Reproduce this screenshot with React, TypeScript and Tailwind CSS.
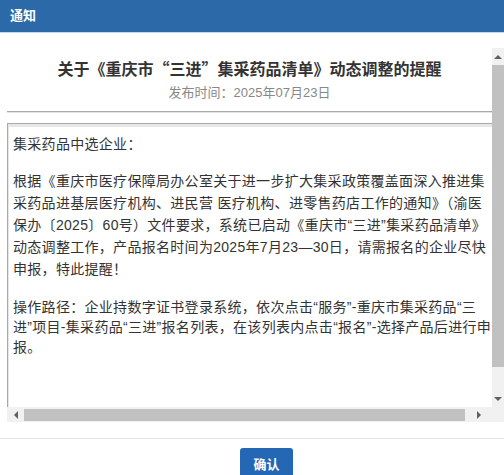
const bodyFont = { fontFamily: '"Liberation Sans", "Noto Sans CJK SC", sans-serif' };

function Arrow({ dir }: { dir: "up" | "down" | "left" | "right" }) {
  const pts = {
    up: "0,4 4,0 8,4",
    down: "0,0 8,0 4,4",
    left: "4,0 4,8 0,4",
    right: "0,0 0,8 4,4",
  }[dir];
  const vertical = dir === "up" || dir === "down";
  return (
    <svg width={vertical ? 8 : 4} height={vertical ? 4 : 8} viewBox={vertical ? "0 0 8 4" : "0 0 4 8"}>
      <polygon points={pts} fill="#606060" />
    </svg>
  );
}

export default function App() {
  return (
    <div className="w-[504px] h-[475px] overflow-hidden bg-white" style={bodyFont}>
      <div className="h-[32px] bg-[#2b69a9] px-[10px] flex items-center text-white font-bold text-[13px]">
        通知
      </div>
      <div className="h-px bg-[#c4d9ee]" />

      <div className="mt-[15px] ml-[7px] flex h-[374px]">
        <div className="w-[485px] flex flex-col">
          <div className="h-[359px] shrink-0 overflow-hidden flex flex-col">
            <h1
              className="mt-[8px] shrink-0 text-center text-[16px] leading-[24px] font-semibold text-[#333]"
              style={{ fontFamily: '"Noto Sans CJK SC", sans-serif' }}
            >
              关于《重庆市“三进”集采药品清单》动态调整的提醒
            </h1>
            <p className="mt-[3px] shrink-0 text-center text-[13px] leading-[20px] text-[#888]">
              发布时间：2025年07月23日
            </p>
            <div className="mt-[8px] shrink-0 h-px bg-[#aaaaaa]" />
            <div className="shrink-0 h-px bg-[#e2e2e2]" />

            <div className="mt-[10px] flex-1 border-l border-t border-[#a9a9a9] shadow-[inset_1px_3px_0_#e6e6e6] pl-[5px] pt-[9px] text-[14px] leading-[22px] tracking-[0.3px] text-[#333] whitespace-nowrap">
              <p>集采药品中选企业：</p>
              <p className="mt-[15px]">
                根据《重庆市医疗保障局办公室关于进一步扩大集采政策覆盖面深入推进集
                <br />
                采药品进基层医疗机构、进民营 医疗机构、进零售药店工作的通知》（渝医
                <br />
                保办〔2025〕60号）文件要求，系统已启动《重庆市“三进”集采药品清单》
                <br />
                动态调整工作，产品报名时间为2025年7月23—30日，请需报名的企业尽快
                <br />
                申报，特此提醒！
              </p>
              <p className="mt-[17px] leading-[20px]">
                操作路径：企业持数字证书登录系统，依次点击“服务”-重庆市集采药品“三
                <br />
                进”项目-集采药品“三进”报名列表，在该列表内点击“报名”-选择产品后进行申
                <br />
                报。
              </p>
            </div>
          </div>

          <div className="h-[15px] shrink-0 bg-[#f1f1f1] flex items-center">
            <div className="w-[17px] flex justify-center">
              <Arrow dir="left" />
            </div>
            <div className="w-[441px] h-[12px] bg-[#c1c1c1]" />
            <div className="flex-1 flex justify-center">
              <Arrow dir="right" />
            </div>
          </div>
        </div>

        <div className="w-[12px] flex flex-col bg-[#f1f1f1]">
          <div className="h-[17px] shrink-0 flex items-center justify-center">
            <Arrow dir="up" />
          </div>
          <div className="h-[302px] shrink-0 bg-[#c1c1c1]" />
          <div className="flex-1" />
          <div className="h-[17px] shrink-0 flex items-center justify-center">
            <Arrow dir="down" />
          </div>
          <div className="h-[15px] shrink-0 bg-[#f1f1f1]" />
        </div>
      </div>

      <div className="mt-[16px] h-px bg-[#e6e6e6]" />
      <div className="mt-[9px] pl-[240px]">
        <button className="w-[53px] h-[34px] bg-[#2467b5] rounded-[3px] text-white text-[13px] font-bold">
          确认
        </button>
      </div>
    </div>
  );
}
